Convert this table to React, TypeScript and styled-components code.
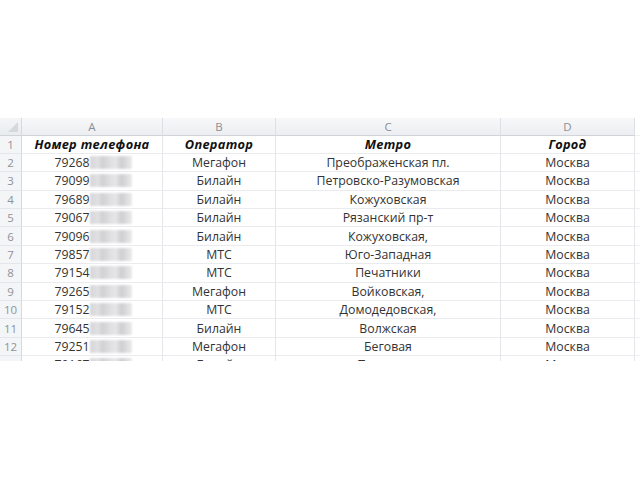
import React from "react";
import styled, { createGlobalStyle } from "styled-components";

const Global = createGlobalStyle`
  html, body { margin: 0; padding: 0; background: #ffffff; }
  body { font-family: "Open Sans", "Liberation Sans", sans-serif; }
`;

const Page = styled.div`
  width: 640px;
  height: 480px;
  padding-top: 118px;
  box-sizing: border-box;
  background: #fff;
`;

const Sheet = styled.div`
  height: 243px;
  overflow: hidden;
  display: grid;
  grid-template-columns: 22px 141px 113px 225px 134px 5px;
  grid-template-rows: 17.5px;
  grid-auto-rows: 18.4px;
  color: #333;
`;

const Corner = styled.div`
  background: linear-gradient(#f3f5f7, #e9ecef);
  border-right: 1px solid #d6dae0;
  border-bottom: 1px solid #cfd4da;
  position: relative;
  &::after {
    content: "";
    position: absolute;
    right: 3px;
    bottom: 3px;
    border-left: 10px solid transparent;
    border-bottom: 10px solid #d5d9de;
  }
`;

const ColHead = styled.div`
  background: linear-gradient(#f7f8f9, #eceef1);
  border-right: 1px solid #dcdfe4;
  border-bottom: 1px solid #cfd4da;
  display: flex;
  align-items: center;
  justify-content: center;
  font-size: 11.5px;
  color: #8a8f96;
`;

const RowHead = styled.div`
  background: #f4f5f7;
  border-right: 1px solid #d6dae0;
  border-bottom: 1px solid #e3e6ea;
  display: flex;
  align-items: center;
  justify-content: center;
  font-size: 11.5px;
  color: #8e9399;
`;

const Cell = styled.div<{ $bold?: boolean }>`
  border-right: 1px solid #e4e6ea;
  border-bottom: 1px solid #e9ebee;
  display: flex;
  align-items: center;
  justify-content: center;
  font-size: ${(p) => (p.$bold ? "12.8px" : "12.3px")};
  white-space: nowrap;
  font-weight: ${(p) => (p.$bold ? 700 : 400)};
  font-style: ${(p) => (p.$bold ? "italic" : "normal")};
  letter-spacing: ${(p) => (p.$bold ? "0.3px" : "0")};
  color: ${(p) => (p.$bold ? "#111" : "#333")};
`;

const Edge = styled.div`
  border-bottom: 1px solid #eef0f2;
`;

const Phone = styled.span`
  display: inline-flex;
  align-items: center;
  padding-left: 2px;
`;

const Blur = styled.span`
  display: inline-block;
  width: 42px;
  height: 13px;
  margin-left: 0;
  background: linear-gradient(
    90deg,
    #cfcfd2 0%,
    #dcdcde 18%,
    #c9c9cc 30%,
    #d8d8da 45%,
    #e3e3e5 60%,
    #c7c7ca 75%,
    #e8e8ea 100%
  );
  filter: blur(1.2px);
  opacity: 0.85;
`;

type Row = [string, string, string, string];

const rows: Row[] = [
  ["79268", "Мегафон", "Преображенская пл.", "Москва"],
  ["79099", "Билайн", "Петровско-Разумовская", "Москва"],
  ["79689", "Билайн", "Кожуховская", "Москва"],
  ["79067", "Билайн", "Рязанский пр-т", "Москва"],
  ["79096", "Билайн", "Кожуховская,", "Москва"],
  ["79857", "МТС", "Юго-Западная", "Москва"],
  ["79154", "МТС", "Печатники", "Москва"],
  ["79265", "Мегафон", "Войковская,", "Москва"],
  ["79152", "МТС", "Домодедовская,", "Москва"],
  ["79645", "Билайн", "Волжская", "Москва"],
  ["79251", "Мегафон", "Беговая", "Москва"],
  ["79167", "Билайн", "Таганская", "Москва"],
];

export default function App() {
  return (
    <Page>
      <Global />
      <Sheet>
        <Corner />
        {["A", "B", "C", "D"].map((l) => (
          <ColHead key={l}>{l}</ColHead>
        ))}
        <Edge />

        <RowHead>1</RowHead>
        <Cell $bold>Номер телефона</Cell>
        <Cell $bold>Оператор</Cell>
        <Cell $bold>Метро</Cell>
        <Cell $bold>Город</Cell>
        <Edge />

        {rows.map((r, i) => (
          <React.Fragment key={i}>
            <RowHead>{i + 2}</RowHead>
            <Cell>
              <Phone>
                {r[0]}
                <Blur />
              </Phone>
            </Cell>
            <Cell>{r[1]}</Cell>
            <Cell>{r[2]}</Cell>
            <Cell>{r[3]}</Cell>
            <Edge />
          </React.Fragment>
        ))}
      </Sheet>
    </Page>
  );
}
